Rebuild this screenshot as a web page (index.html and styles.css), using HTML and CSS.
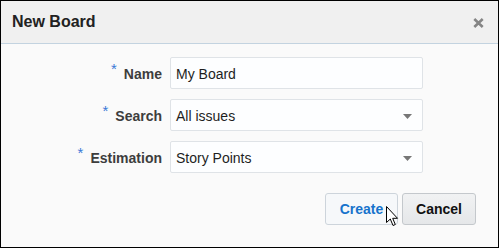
FILE: index.html
```html
<!DOCTYPE html>
<html>
<head>
<meta charset="utf-8">
<link rel="stylesheet" href="styles.css">
</head>
<body>
<div class="dialog">
  <div class="header">
    <h1 class="title">New Board</h1>
    <svg class="close" width="11" height="10" viewBox="0 0 11 10"><path d="M1.3 1 L9.7 9 M9.7 1 L1.3 9" stroke="#858585" stroke-width="2.6" fill="none"/></svg>
  </div>
  <div class="body">
    <div class="form">
      <label class="label"><span class="req">*</span>Name</label>
      <div class="field"><span class="value">My Board</span></div>
      <label class="label"><span class="req">*</span>Search</label>
      <div class="field select"><span class="value">All issues</span><svg class="arrow" width="9" height="5" viewBox="0 0 9 5"><polygon points="0,0 9,0 4.5,5" fill="#777"/></svg></div>
      <label class="label"><span class="req">*</span>Estimation</label>
      <div class="field select"><span class="value">Story Points</span><svg class="arrow" width="9" height="5" viewBox="0 0 9 5"><polygon points="0,0 9,0 4.5,5" fill="#777"/></svg></div>
    </div>
    <div class="actions">
      <button class="btn btn-create">Create</button>
      <button class="btn btn-cancel">Cancel</button>
    </div>
  </div>
  <svg class="cursor" width="13" height="21" viewBox="0 0 13 21"><path d="M0.5 0.5 L0.5 16.5 L4.3 13 L7 19.5 L9.3 18.5 L6.7 12.3 L11.5 12.3 Z" fill="#fff" stroke="#000" stroke-width="1" stroke-linejoin="miter"/></svg>
</div>
</body>
</html>
```
FILE: styles.css
```css
* { box-sizing: border-box; }
html, body { margin: 0; padding: 0; }
body { font-family: "Liberation Sans", Arial, sans-serif; background: #fff; }
.dialog {
  position: relative;
  width: 499px;
  height: 248px;
  border: 1px solid #000;
  background: #fafafa;
  display: flex;
  flex-direction: column;
}
.header {
  height: 43px;
  background: #f0f0f0;
  border-bottom: 1px solid #c3d3e0;
  display: flex;
  align-items: center;
  justify-content: space-between;
  padding: 0 14px 0 11px;
}
.title {
  margin: 0;
  font-size: 16px;
  font-weight: bold;
  color: #222;
}
.close { display: block; margin-top: 1px; }
.body { padding-top: 13px; }
.form {
  display: grid;
  grid-template-columns: 161px 253px;
  grid-auto-rows: 32px;
  column-gap: 8px;
  row-gap: 10px;
}
.label {
  display: flex;
  align-items: center;
  justify-content: flex-end;
  font-size: 14px;
  font-weight: bold;
  color: #3d3d3d;
  padding-top: 2px;
}
.req {
  color: #3a78d6;
  font-size: 15px;
  font-weight: normal;
  margin-right: 7px;
  position: relative;
  top: -6px;
}
.field {
  display: flex;
  align-items: center;
  justify-content: space-between;
  background: #fdfeff;
  border: 1px solid #dfe3e7;
  border-radius: 2px;
  padding: 1px 10px 0 5px;
  font-size: 14px;
  color: #1e1e1e;
}
.arrow { display: block; margin-top: 1px; }
.actions {
  display: flex;
  justify-content: flex-end;
  gap: 4px;
  margin-top: 20px;
  padding-right: 22px;
}
.btn {
  height: 32px;
  font-family: "Liberation Sans", Arial, sans-serif;
  font-size: 14px;
  font-weight: bold;
  border-radius: 3px;
  padding: 0;
}
.btn-create {
  width: 73px;
  background: #f6f8fa;
  border: 1px solid #cdd4db;
  color: #1773cc;
}
.btn-cancel {
  width: 74px;
  background: linear-gradient(#f1f2f3, #e5e7e9);
  border: 1px solid #c4c8cc;
  color: #111;
}
.cursor {
  position: absolute;
  left: 385px;
  top: 205px;
}
```
